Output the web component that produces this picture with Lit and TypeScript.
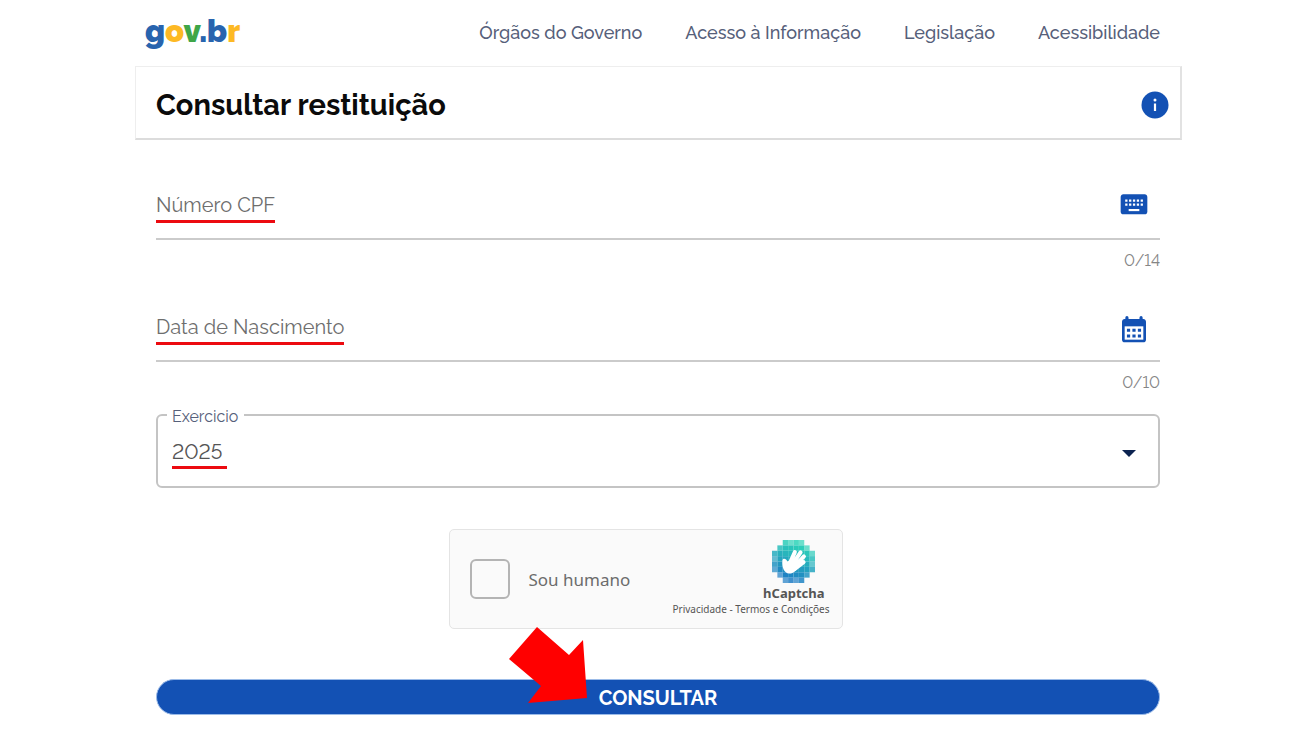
import { LitElement, html, css, svg } from "lit";
import { customElement, property } from "lit/decorators.js";

@customElement("captcha-logo")
class CaptchaLogo extends LitElement {
  static styles = css`
    :host {
      display: block;
    }
    .mark {
      display: block;
      width: 43px;
      height: 43px;
    }
  `;

  private cells() {
    const inset = [2, 1, 0, 0, 0, 0, 1, 2];
    const top = [45, 212, 184];
    const bottom = [30, 125, 196];
    return inset.flatMap((skip, row) =>
      Array.from({ length: 8 - skip * 2 }, (_, i) => {
        const col = i + skip;
        const t = Math.min(1, Math.max(0, row / 7 + (3.5 - col) * 0.05));
        const rgb = top.map((c, k) => Math.round(c + (bottom[k] - c) * t));
        const edge = i === 0 || i === 7 - skip * 2 || row === 0 || row === 7;
        const opacity = edge ? ((row + col) % 2 ? 0.7 : 0.85) : 1;
        return svg`<rect x=${col * 16} y=${row * 16} width="16" height="16"
          fill="rgb(${rgb.join(",")})" opacity=${opacity}></rect>`;
      })
    );
  }

  render() {
    return html`<svg class="mark" viewBox="0 0 128 128" aria-hidden="true">
      ${this.cells()}
      <g fill="none" stroke="#fff" stroke-linecap="round" stroke-width="12">
        <path d="M52 72 L68 36 M60 74 L85 37 M66 80 L95 49 M68 86 L94 66"></path>
      </g>
      <path
        fill="#fff"
        d="M31 60 C34 52 43 56 46 64 L58 58 L76 76 C75 92 62 101 51 100 C36 98 29 82 31 60 Z"
      ></path>
    </svg>`;
  }
}

@customElement("text-field")
class TextField extends LitElement {
  @property() label = "";
  @property() icon = "keyboard";
  @property({ type: Number }) max = 14;
  @property({ type: Number }) length = 0;

  static styles = css`
    :host {
      display: block;
    }
    .row {
      display: flex;
      align-items: center;
      height: 68px;
      box-sizing: border-box;
      border-bottom: 2px solid #cbcbcb;
    }
    .label {
      padding: 6px 0 3px;
      border-bottom: 3px solid #ec0a10;
      color: #6e6e6e;
      font-size: 20px;
      line-height: 24px;
    }
    .input {
      flex: 1;
      min-width: 0;
      height: 40px;
      border: 0;
      outline: 0;
      background: none;
      color: #555;
      font: inherit;
      font-size: 20px;
    }
    .action {
      display: flex;
      margin-right: 10px;
      padding: 0;
      border: 0;
      background: none;
      color: #1351b4;
      cursor: pointer;
    }
    .glyph {
      width: 32px;
      height: 32px;
    }
    .count {
      padding: 10px 0 1px;
      color: #858585;
      font-size: 16px;
      line-height: 22px;
      text-align: right;
      font-variant-numeric: lining-nums;
    }
  `;

  private glyph() {
    return this.icon === "keyboard"
      ? svg`<path fill="currentColor" d="M20 4H4c-1.100 0-2 .9-2 2v11c0 1.100.9 2 2 2h16c1.100 0 2-.9 2-2V6c0-1.100-.9-2-2-2z"></path>
          <path stroke="#fff" stroke-width="1.700" stroke-dasharray="1.700 1.200" d="M5.400 8.700H18.700M5.400 11.700H18.700"></path>
          <path stroke="#fff" stroke-width="1.600" d="M8 15.800H16"></path>`
      : svg`<g transform="translate(0 2.500)">
          <path fill="currentColor" d="M19 3.500h-.5V2.500a1.200 1.200 0 0 0-2.400 0v1H7.900V2.500a1.200 1.200 0 0 0-2.400 0v1H5c-1.100 0-2 .9-2 2v13.500c0 1.100.9 2 2 2h14c1.100 0 2-.9 2-2V5.500c0-1.100-.9-2-2-2z"></path>
          <path fill="#fff" d="M5 9h14v10H5z"></path>
          <path stroke="currentColor" stroke-width="2.200" stroke-dasharray="2.400 1.700" d="M6.700 12H17.500M6.700 16.200H17.500"></path>
        </g>`;
  }

  render() {
    return html`
      <div class="row">
        <label class="label" for="value">${this.label}</label>
        <input
          class="input"
          id="value"
          type="text"
          maxlength=${this.max}
          @input=${(e: Event) => (this.length = (e.target as HTMLInputElement).value.length)}
        />
        <button class="action" type="button" aria-label=${this.label}>
          <svg class="glyph" viewBox="0 0 24 24">${this.glyph()}</svg>
        </button>
      </div>
      <div class="count">${this.length}/${this.max}</div>
    `;
  }
}

@customElement("app-root")
class AppRoot extends LitElement {
  static styles = css`
    :host {
      display: block;
      min-height: 100vh;
      box-sizing: border-box;
      padding: 0 118px 16px 135px;
      background: #fff;
      font-family: Raleway, Lato, "Open Sans", sans-serif;
    }
    .header {
      display: flex;
      align-items: center;
      justify-content: space-between;
      height: 66px;
      padding: 0 22px 0 10px;
    }
    .logo {
      padding-bottom: 4px;
      color: #2864ae;
      font-size: 31px;
      font-weight: 900;
      line-height: 44px;
      text-decoration: none;
    }
    .yellow {
      color: #fdb924;
    }
    .green {
      color: #3fa648;
    }
    .nav {
      display: flex;
      gap: 43px;
    }
    .link {
      color: #56607a;
      font-size: 18px;
      font-weight: 500;
      line-height: 24px;
      text-decoration: none;
    }
    .card {
      display: flex;
      align-items: center;
      justify-content: space-between;
      height: 74px;
      box-sizing: border-box;
      padding: 4px 10px 0 20px;
      border: 1px solid #eee;
      border-right: 2px solid #e2e2e2;
      border-bottom: 2px solid #dcdcdc;
    }
    .title {
      margin: 0;
      color: #0b0b0b;
      font-size: 29px;
      font-weight: 700;
      line-height: 36px;
    }
    .info {
      display: flex;
      padding: 0;
      border: 0;
      background: none;
      cursor: pointer;
    }
    .info-icon {
      width: 30px;
      height: 30px;
    }
    .form {
      display: flex;
      flex-direction: column;
      padding: 32px 22px 0 21px;
    }
    .second {
      margin-top: 21px;
    }
    .exercise {
      height: 85px;
      box-sizing: border-box;
      margin: 8px 0 0;
      padding: 0;
      border: 2px solid #c4c4c4;
      border-radius: 6px;
      min-width: 0;
    }
    .legend {
      margin-left: 9px;
      padding: 4px 6px 0 5px;
      color: #56607a;
      font-size: 16px;
      line-height: 20px;
    }
    .select-box {
      position: relative;
      height: 59px;
    }
    .select {
      width: 100%;
      height: 48px;
      padding: 0 14px;
      border: 0;
      outline: 0;
      appearance: none;
      background: none;
      color: #555;
      font: inherit;
      font-size: 21px;
      font-variant-numeric: lining-nums;
    }
    .mark {
      position: absolute;
      left: 14px;
      top: 39px;
      width: 55px;
      height: 3px;
      background: #ec0a10;
    }
    .caret {
      position: absolute;
      right: 22px;
      top: 23px;
      width: 14px;
      height: 7px;
      pointer-events: none;
    }
    .captcha {
      display: flex;
      align-items: center;
      justify-content: space-between;
      align-self: center;
      width: 394px;
      height: 100px;
      box-sizing: border-box;
      margin: 41px 25px 0 0;
      padding: 0 12px 0 20px;
      border: 1px solid #e4e4e4;
      border-radius: 5px;
      background: #fafafa;
      color: #555;
      font-family: "Noto Sans", "Open Sans", sans-serif;
    }
    .human {
      display: flex;
      align-items: center;
      gap: 19px;
      color: #6c6c6c;
      font-size: 17px;
    }
    .tick {
      width: 40px;
      height: 40px;
      margin: 0;
      appearance: none;
      border: 2px solid #b4b4b4;
      border-radius: 6px;
      background: #fafafa;
    }
    .brand {
      display: flex;
      flex-direction: column;
      align-items: flex-end;
      padding-bottom: 3px;
    }
    .brand-top {
      display: flex;
      flex-direction: column;
      align-items: center;
      padding-right: 5px;
      font-size: 13px;
      font-weight: 700;
      line-height: 20px;
    }
    .legal {
      font-size: 10px;
      line-height: 12px;
      white-space: nowrap;
    }
    .legal-link {
      color: inherit;
      text-decoration: none;
    }
    .submit-box {
      position: relative;
      display: flex;
      margin-top: 50px;
    }
    .submit {
      flex: 1;
      height: 36px;
      padding: 2px 0 0;
      border: 1px solid #9bbbe8;
      border-radius: 18px;
      background: #1351b4;
      color: #fff;
      font: inherit;
      font-size: 20px;
      font-weight: 700;
      cursor: pointer;
    }
    .arrow {
      position: absolute;
      left: calc(50% - 149px);
      top: -52px;
      width: 78px;
      height: 76px;
      pointer-events: none;
    }
  `;

  render() {
    return html`
      <header class="header">
        <a class="logo" href="#"
          >g<span class="yellow">o</span><span class="green">v</span>.b<span class="yellow">r</span></a
        >
        <nav class="nav">
          ${["Órgãos do Governo", "Acesso à Informação", "Legislação", "Acessibilidade"].map(
            (text) => html`<a class="link" href="#">${text}</a>`
          )}
        </nav>
      </header>
      <section class="card">
        <h1 class="title">Consultar restituição</h1>
        <button class="info" type="button" aria-label="Informações">
          <svg class="info-icon" viewBox="0 0 30 30">
            <circle cx="15" cy="15" r="13.500" fill="#1351b4"></circle>
            <circle cx="15" cy="10" r="1.500" fill="#fff"></circle>
            <path d="M15 13.500V21" stroke="#fff" stroke-width="2.200"></path>
          </svg>
        </button>
      </section>
      <form class="form" @submit=${(e: Event) => e.preventDefault()}>
        <text-field label="Número CPF" icon="keyboard" max="14"></text-field>
        <text-field class="second" label="Data de Nascimento" icon="calendar" max="10"></text-field>
        <fieldset class="exercise">
          <legend class="legend"><label for="exercise">Exercicio</label></legend>
          <div class="select-box">
            <select class="select" id="exercise">
              <option>2025</option>
            </select>
            <span class="mark"></span>
            <svg class="caret" viewBox="0 0 14 7"><path d="M0 0H14L7 7Z" fill="#0c2350"></path></svg>
          </div>
        </fieldset>
        <div class="captcha">
          <label class="human"><input class="tick" type="checkbox" />Sou humano</label>
          <div class="brand">
            <div class="brand-top"><captcha-logo></captcha-logo>hCaptcha</div>
            <div class="legal">
              <a class="legal-link" href="#">Privacidade</a> -
              <a class="legal-link" href="#">Termos e Condições</a>
            </div>
          </div>
        </div>
        <div class="submit-box">
          <button class="submit" type="submit">CONSULTAR</button>
          <svg class="arrow" viewBox="0 0 78 76" aria-hidden="true">
            <polygon points="28,0 60,28 74,13 78,71 19,76 32,59 0,32" fill="#f00"></polygon>
          </svg>
        </div>
      </form>
    `;
  }
}
